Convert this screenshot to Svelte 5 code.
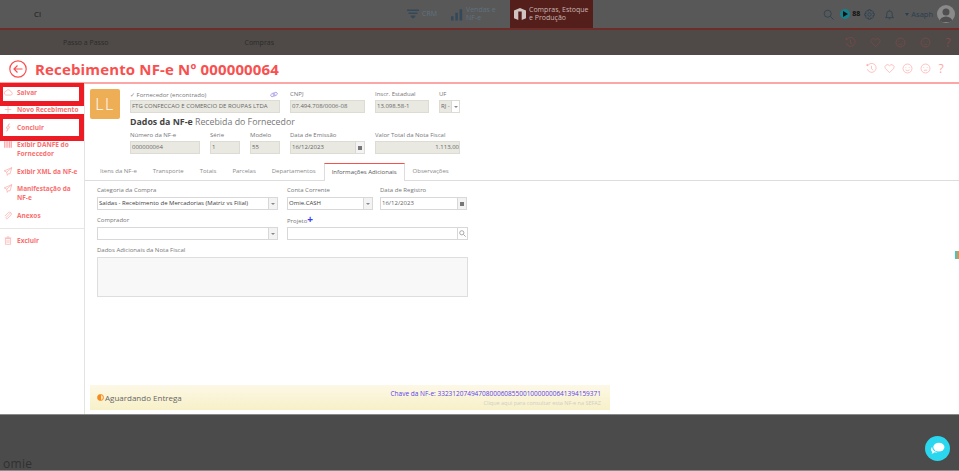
<script>
  const side = [
    { l: 'Salvar', i: 'cloud' },
    { l: 'Novo Recebimento', i: 'plus' },
    { l: 'Concluir', i: 'bolt' },
    { l: 'Exibir DANFE do Fornecedor', i: 'bars' },
    { l: 'Exibir XML da NF-e', i: 'send' },
    { l: 'Manifestação da NF-e', i: 'send' },
    { l: 'Anexos', i: 'clip' }
  ];
  const tabs = ['Itens da NF-e', 'Transporte', 'Totais', 'Parcelas', 'Departamentos', 'Informações Adicionais', 'Observações'];
</script>

{#snippet icon(n)}
  <svg class="sico" viewBox="0 0 14 14" fill="none" stroke="currentColor" stroke-width="1">
    {#if n === 'cloud'}<path d="M3.500 11h7.500a2.500 2.500 0 0 0 .4-5A4 4 0 0 0 4 4.800 3.200 3.200 0 0 0 3.500 11z" />
    {:else if n === 'plus'}<path d="M7 2v10M2 7h10" />
    {:else if n === 'bolt'}<path d="M9 1 4 8h3l-2 5 5-7H7z" />
    {:else if n === 'bars'}<path d="M2 2v10M5.500 2v10M9 2v10M12 2v10" stroke-width="2" />
    {:else if n === 'send'}<path d="M13 1 1 6l4 2 1 5 2-3 2 1zM5 8l8-7" />
    {:else if n === 'clip'}<path d="M11 3 4 10a1.500 1.500 0 0 0 2 2l6-6a3 3 0 0 0-4-4L2 8" />
    {:else if n === 'trash'}<path d="M3 4h8v9H3zM2 3h10M5 1.500h4M5.500 6v5M8.500 6v5" />{/if}
  </svg>
{/snippet}

{#snippet face(mouth)}
  <svg class="tico" viewBox="0 0 16 16" fill="none" stroke="currentColor"><circle cx="8" cy="8" r="6.500" /><path d="M5.500 6v1M10.500 6v1" /><path d={mouth} /></svg>
{/snippet}

{#snippet toolIcons()}
  <svg class="tico" viewBox="0 0 16 16" fill="none" stroke="currentColor"><path d="M2.500 4A6.500 6.500 0 1 1 2 9" /><path d="M8 4v4.500l2.500 2" /><circle cx="2" cy="3" r="1" fill="currentColor" /></svg>
  <svg class="tico" viewBox="0 0 16 16" fill="none" stroke="currentColor"><path d="M8 14 2 8a3.500 3.500 0 0 1 6-4 3.500 3.500 0 0 1 6 4z" /></svg>
  {@render face('M5 10q3 2.500 6 0')}
  {@render face('M5.500 10.500h5')}
  <span class="q">?</span>
{/snippet}

<div class="page">
  <header class="topbar">
    <div class="logo">Cl</div>
    <nav class="modules">
      <div class="mod crm">
        <svg viewBox="0 0 16 12" width="12" height="10" fill="#33495a"><path d="M0 0h16v2H0zM2 4h12v2H2zM5 8h6v2l-3 2-3-2z" /></svg>
        <span>CRM</span>
      </div>
      <div class="mod vendas">
        <svg viewBox="0 0 14 14" width="12" height="13" fill="#33495a"><path d="M0 9h3v5H0zM5 5h3v9H5zM10 1h3v13h-3z" /></svg>
        <span>Vendas e<br />NF-e</span>
      </div>
      <div class="mod active">
        <svg viewBox="0 0 14 14" width="12" height="12" fill="#cfc4c2"><path d="M0 3 7 0l7 3v9l-5 2V4H5v10l-5-2z" /></svg>
        <span>Compras, Estoque<br />e Produção</span>
      </div>
    </nav>
    <div class="user">
      <svg class="uico s" viewBox="0 0 14 14" fill="none" stroke="#28404f"><circle cx="6" cy="6" r="4.500" /><path d="m9.500 9.500 4 4" /></svg>
      <span class="play"><i></i></span>
      <span class="gridmini">88</span>
      <svg class="uico g" viewBox="0 0 14 14" fill="none" stroke="#28404f"><circle cx="7" cy="7" r="2.200" /><path d="M5.800 1h2.400l.4 1.800 1.700-.8 1.700 1.700-.8 1.700L13 5.800v2.400l-1.800.4.800 1.700-1.700 1.700-1.700-.8L8.200 13H5.800l-.4-1.800-1.700.8L2 10.300l.8-1.700L1 8.200V5.800l1.800-.4L2 3.700 3.700 2l1.700.8z" /></svg>
      <svg class="uico b" viewBox="0 0 14 14" fill="none" stroke="#28404f"><path d="M2 11h10l-1.500-2V6a3.500 3.500 0 0 0-7 0v3zM6 12.500h2M7 1v1" /></svg>
      <span class="name"><i class="caret"></i>Asaph</span>
      <span class="avatar">
        <svg viewBox="0 0 18 18" width="18" height="18" fill="#4f4f4f"><circle cx="9" cy="7" r="3.500" /><path d="M2.500 17a6.500 5.500 0 0 1 13 0z" /></svg>
      </span>
    </div>
  </header>

  <div class="subbar">
    <div class="crumbs"><span class="c1">Passo a Passo</span><span class="c2">Compras</span></div>
    <div class="tools dim">{@render toolIcons()}</div>
  </div>

  <section class="window">
    <div class="title">
      <svg class="back" viewBox="0 0 18 18" fill="none" stroke="#f9504f" stroke-width="1.200"><circle cx="9" cy="9" r="8.200" /><path d="M13.500 9H5M8.500 5.500 5 9l3.500 3.500" /></svg>
      <h1>Recebimento NF-e Nº 000000064</h1>
      <div class="tools">{@render toolIcons()}</div>
    </div>

    <div class="body">
      <aside class="side">
        {#each side as s}
          <div class="sitem">
            {@render icon(s.i)}
            <span>{s.l}</span>
          </div>
        {/each}
        <div class="sitem excl">
          {@render icon('trash')}
          <span>Excluir</span>
        </div>
        <span class="mark m1"></span>
        <span class="mark m2"></span>
      </aside>

      <main class="main">
        <div class="head">
          <div class="badge">LL</div>
          <div class="headform">
            <div class="row">
              <div class="f w150">
                <div class="lab between"><span><span class="tick">✓</span> Fornecedor (encontrado)</span>
                  <svg viewBox="0 0 10 8" width="8" height="7" fill="none" stroke="#a99ce8"><ellipse cx="3.500" cy="4.500" rx="2.800" ry="2" transform="rotate(-30 3.500 4.500)" /><ellipse cx="6.500" cy="3.500" rx="2.800" ry="2" transform="rotate(-30 6.500 3.500)" /></svg>
                </div>
                <div class="inp ro">FTG CONFECCAO E COMERCIO DE ROUPAS LTDA</div>
              </div>
              <div class="f w75"><div class="lab">CNPJ</div><div class="inp ro">07.494.708/0006-08</div></div>
              <div class="f w54"><div class="lab">Inscr. Estadual</div><div class="inp ro">13.098.58-1</div></div>
              <div class="f w22"><div class="lab">UF</div><div class="inp ro sel"><span>RJ -</span><b class="addon sm"><i class="dn"></i></b></div></div>
            </div>
            <div class="sect"><b>Dados da NF-e</b> Recebida do Fornecedor</div>
            <div class="row">
              <div class="f w70"><div class="lab">Número da NF-e</div><div class="inp ro">000000064</div></div>
              <div class="f w30"><div class="lab">Série</div><div class="inp ro">1</div></div>
              <div class="f w30"><div class="lab">Modelo</div><div class="inp ro">55</div></div>
              <div class="f w75"><div class="lab">Data de Emissão</div><div class="inp ro sel"><span>16/12/2023</span><b class="addon"><i class="cal"></i></b></div></div>
              <div class="f w85"><div class="lab">Valor Total da Nota Fiscal</div><div class="inp ro right">1.113,00</div></div>
            </div>
          </div>
        </div>

        <div class="tabs">
          {#each tabs as t, i}
            <div class="tab" class:on={i === 5}>{t}</div>
          {/each}
        </div>

        <div class="form">
          <div class="row r1">
            <div class="f w181"><div class="lab">Categoria da Compra</div><div class="inp sel dark"><span>Saídas - Recebimento de Mercadorias (Matriz vs Filial)</span><b class="addon"><i class="dn"></i></b></div></div>
            <div class="f w86"><div class="lab">Conta Corrente</div><div class="inp sel dark"><span>Omie.CASH</span><b class="addon"><i class="dn"></i></b></div></div>
            <div class="f w87"><div class="lab">Data de Registro</div><div class="inp sel"><span>16/12/2023</span><b class="addon"><i class="cal"></i></b></div></div>
          </div>
          <div class="row r2">
            <div class="f w181"><div class="lab">Comprador</div><div class="inp sel"><span></span><b class="addon"><i class="dn"></i></b></div></div>
            <div class="f w181"><div class="lab">Projeto<span class="plus">+</span></div><div class="inp sel"><span></span><b class="addon white"><svg viewBox="0 0 10 10" width="7" height="7" fill="none" stroke="#888"><circle cx="4" cy="4" r="3" /><path d="m6.500 6.500 3 3" /></svg></b></div></div>
          </div>
          <div class="f"><div class="lab">Dados Adicionais da Nota Fiscal</div><div class="area"></div></div>
        </div>

        <div class="status">
          <div class="st"><span class="half"></span>Aguardando Entrega</div>
          <div class="key">
            <div class="k1">Chave da NF-e: 33231207494708000608550010000000641394159371</div>
            <div class="k2">Clique aqui para consultar esta NF-e na SEFAZ</div>
          </div>
        </div>
      </main>
    </div>
    <span class="edge"></span>
  </section>

  <footer class="foot">
    <span class="omie">omie</span>
    <span class="chat">
      <svg viewBox="0 0 16 14" width="15" height="13" fill="#fff"><ellipse cx="9.500" cy="5.500" rx="6" ry="4.800" /><path d="M5 11c-1 1-2 1.500-3.500 1.500.6-.6 1-1.300 1-2C1.500 10 1 9 1 8c0-1 .5-2 1.200-2.500C2.500 8.500 4.500 10.500 8 11c-1 .3-2 .3-3 0z" /></svg>
    </span>
  </footer>
</div>

<style>
  :global(body) { margin: 0; background: #4b4b4b; }
  .page { width: 959px; height: 471px; overflow: hidden; display: flex; flex-direction: column; font-family: "Open Sans", "Liberation Sans", sans-serif; }

  .topbar { height: 28px; background: #585858; border-bottom: 2px solid #6e2c28; display: flex; align-items: stretch; position: relative; flex: none; }
  .logo { width: 34px; padding-left: 34px; font-size: 8px; line-height: 27px; color: #1a1a1a; }
  .modules { display: flex; margin-left: 339px; flex: 1; font-size: 7px; line-height: 8px; color: #5f7280; white-space: nowrap; }
  .mod { display: flex; align-items: center; gap: 3px; box-sizing: border-box; }
  .mod svg { flex: none; }
  .crm { width: 44px; }
  .vendas { width: 59px; }
  .active { background: #541e1a; color: #c9b7b4; width: 83px; padding-left: 4px; }
  .user { display: flex; align-items: center; position: absolute; right: 4px; top: 0; height: 28px; }
  .uico { width: 11px; height: 11px; }
  .s { margin-right: 6px; }
  .play { width: 10px; height: 10px; border-radius: 50%; background: #17808d; position: relative; margin-right: 2px; }
  .play i { position: absolute; left: 3px; top: 2px; border-left: 5px solid #111; border-top: 3px solid transparent; border-bottom: 3px solid transparent; }
  .gridmini { font-size: 7px; font-weight: 700; color: #111; margin-right: 4px; line-height: 10px; width: 8px; }
  .g { margin-right: 9px; }
  .b { margin-right: 10px; }
  .name { font-size: 7.500px; color: #28404f; margin-right: 4px; }
  .caret { display: inline-block; border-top: 3px solid #28404f; border-left: 2px solid transparent; border-right: 2px solid transparent; margin-right: 2px; vertical-align: 1px; }
  .avatar { width: 18px; height: 18px; border-radius: 50%; background: #8a8a8a; overflow: hidden; }
  .avatar svg { display: block; }

  .subbar { height: 25px; background: #4f4a48; display: flex; align-items: center; justify-content: space-between; flex: none; padding-right: 8px; }
  .crumbs { font-size: 7px; color: #2a2a2a; padding-left: 63px; display: flex; }
  .c2 { margin-left: 136px; }

  .tools { display: flex; align-items: center; color: #fda8a6; gap: 7px; }
  .tools.dim { color: #7d4a45; gap: 14px; }
  .tico { width: 11px; height: 11px; stroke-width: 1; }
  .q { font-size: 12px; line-height: 12px; width: 6px; text-align: center; }

  .window { height: 359px; background: #fff; display: flex; flex-direction: column; flex: none; position: relative; }
  .title { height: 27px; border-bottom: 2px solid #fca7a5; display: flex; align-items: center; padding: 0 15px 0 9px; flex: none; }
  .back { width: 18px; height: 18px; margin-right: 8px; }
  h1 { margin: 0; font-size: 15px; font-weight: 700; color: #f9504f; flex: 1; line-height: 20px; letter-spacing: .15px; }

  .body { flex: 1; display: flex; min-height: 0; }
  .side { width: 85px; flex: none; border-right: 1px solid #e3e3e3; box-sizing: border-box; position: relative; padding-top: 3.500px; font-size: 6.500px; line-height: 9px; font-weight: 700; color: #f9706f; }
  .sitem { display: flex; padding: 0 5px 0 3px; gap: 4px; margin-bottom: 8.500px; }
  .sico { width: 10px; height: 9px; flex: none; color: #fba3a2; }
  .excl { margin: 0; padding-top: 7px; margin-top: 8px; border-top: 1px solid #e6e6e6; }
  .mark { position: absolute; left: 0; width: 84px; box-sizing: border-box; border: solid #ed1c24; }
  .m1 { top: -1px; height: 23px; border-width: 4px 5px 5px 3px; }
  .m2 { top: 30px; height: 27px; border-width: 5px 5px 5px 3px; }

  .main { flex: 1; min-width: 0; position: relative; display: flex; flex-direction: column; }
  .head { display: flex; padding: 5px 0 0 5px; height: 79px; box-sizing: border-box; flex: none; }
  .badge { width: 30px; height: 30px; background: #eeae56; border-radius: 2px; color: #fff; font-size: 16px; font-weight: 300; line-height: 30px; text-align: center; margin-right: 10px; letter-spacing: 1.500px; flex: none; }
  .headform { display: flex; flex-direction: column; }
  .row { display: flex; gap: 10px; }
  .f { display: flex; flex-direction: column; }
  .lab { font-size: 6px; line-height: 10px; color: #777; height: 11px; white-space: nowrap; }
  .between { display: flex; justify-content: space-between; align-items: center; padding-right: 2px; }
  .tick { color: #888; }
  .inp { height: 13px; box-sizing: border-box; border: 1px solid #d8d8d8; font-size: 6px; line-height: 11px; padding-left: 1px; color: #666; white-space: nowrap; overflow: hidden; display: flex; background: #fff; }
  .inp span { flex: 1; min-width: 0; overflow: hidden; }
  .ro { background: #e9e9e1; border-color: #dcdcd4; }
  .dark { color: #3e3e3e; }
  .right { justify-content: flex-end; }
  .addon { width: 8px; border-left: 1px solid #d8d8d8; background: #f3f3f3; display: flex; align-items: center; justify-content: center; flex: none; }
  .addon.sm { width: 7px; background: #fff; }
  .addon.white { background: #fff; width: 9px; }
  .dn { border-top: 2.500px solid #888; border-left: 2px solid transparent; border-right: 2px solid transparent; }
  .cal { width: 4px; height: 4px; background: #777; display: block; }
  .w150 { width: 150px; } .w75 { width: 75px; } .w54 { width: 54px; } .w22 { width: 21px; }
  .w70 { width: 70px; } .w30 { width: 30px; } .w85 { width: 85px; }
  .sect { font-size: 8.800px; line-height: 11px; color: #777; margin: 4px 0 2px; white-space: nowrap; }
  .sect b { color: #444; }

  .tabs { display: flex; height: 18px; box-sizing: border-box; border-bottom: 1px solid #ddd; flex: none; padding-left: 15px; font-size: 6px; color: #8a8a8a; }
  .tab { height: 18px; line-height: 17px; margin-right: 16px; white-space: nowrap; box-sizing: border-box; }
  .tab.on { background: #fff; border: 1px solid #ddd; border-top: 1px solid #f9504f; border-bottom: 0; color: #555; padding: 0 7px; margin: 0 8px 0 -8px; }

  .form { padding: 4px 0 0 12px; display: flex; flex-direction: column; gap: 5px; flex: none; }
  .form .lab { height: 12px; }
  .form .r1, .form .r2 { gap: 9px; }
  .w181 { width: 181px; } .w86 { width: 86px; } .w87 { width: 87px; margin-left: -2px; }
  .plus { color: #3b3bf0; font-size: 10px; line-height: 8px; font-weight: 700; }
  .area { height: 40px; background: #f8f8f8; border: 1px solid #dedede; width: 371px; box-sizing: border-box; }

  .status { position: absolute; left: 5px; bottom: 4px; width: 520px; height: 25px; background: linear-gradient(#fdf8e6, #f7f0c8); display: flex; justify-content: space-between; align-items: center; padding: 0 9px 0 7px; box-sizing: border-box; }
  .st { font-size: 8px; color: #666; display: flex; align-items: center; gap: 1px; }
  .half { width: 7px; height: 7px; border-radius: 50%; background: linear-gradient(90deg, #f58b1f 50%, #fde2b8 50%); border: 1px solid #f58b1f; box-sizing: border-box; }
  .key { text-align: right; }
  .k1 { font-size: 6.500px; line-height: 9px; color: #5a3ff0; white-space: nowrap; }
  .k2 { font-size: 5.500px; line-height: 8px; color: #cfcfc6; margin-top: 1px; white-space: nowrap; }

  .edge { position: absolute; right: 0; top: 196px; width: 4px; height: 8px; background: linear-gradient(90deg, #3cc 50%, #f58b3a 50%); }

  .foot { flex: 1; background: #4b4b4b; border-top: 1px solid #8a8a8a; border-bottom: 1px solid #8a8a8a; position: relative; }
  .omie { position: absolute; left: 3px; bottom: 0; font-size: 12px; line-height: 12px; color: #303030; letter-spacing: .3px; }
  .chat { position: absolute; left: 925px; top: 21px; width: 25px; height: 25px; border-radius: 50%; background: #2ad7ee; display: flex; align-items: center; justify-content: center; }
</style>
